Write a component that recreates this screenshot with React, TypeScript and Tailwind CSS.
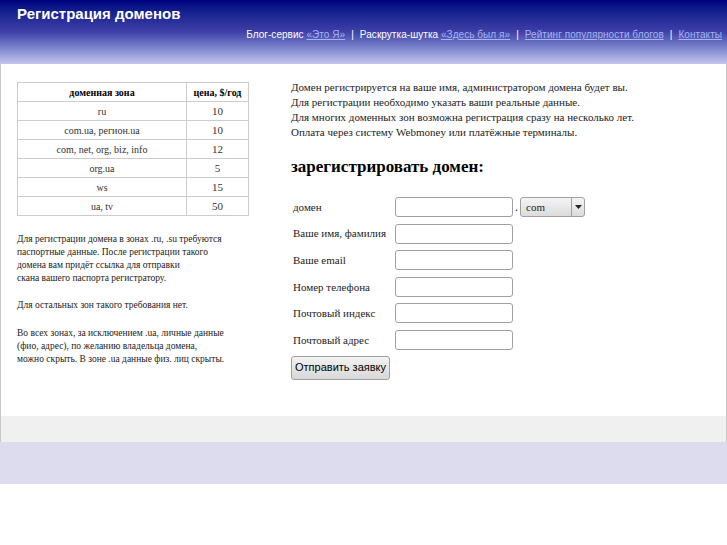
const zones = [
  ['ru', '10'],
  ['com.ua, регион.ua', '10'],
  ['com, net, org, biz, info', '12'],
  ['org.ua', '5'],
  ['ws', '15'],
  ['ua, tv', '50'],
];

const fields = ['Ваше имя, фамилия', 'Ваше email', 'Номер телефона', 'Почтовый индекс', 'Почтовый адрес'];

const serif = { fontFamily: '"Liberation Serif", "DejaVu Serif", serif' };

export default function App() {
  return (
    <div className="w-[727px] h-[545px] bg-white text-black" style={serif}>
      {/* Header */}
      <div className="h-[64px] bg-gradient-to-b from-[#000080] via-[#4040a8] to-[#c6c6ec] px-[17px] pt-[4px] font-['Liberation_Sans',sans-serif]">
        <h1 className="text-[15px] font-bold text-white leading-[20px]">Регистрация доменов</h1>
        <div className="mt-[5px] flex justify-end mr-[-12px] text-[10px] leading-[12px] text-white gap-[6px] tracking-[0.05px]">
          <span>Блог-сервис <a className="text-[#a4b4f4] underline">«Это Я»</a></span>
          <span>|</span>
          <span>Раскрутка-шутка <a className="text-[#a4b4f4] underline">«Здесь был я»</a></span>
          <span>|</span>
          <a className="text-[#a4b4f4] underline">Рейтинг популярности блогов</a>
          <span>|</span>
          <a className="text-[#a4b4f4] underline">Контакты</a>
        </div>
      </div>

      {/* Body */}
      <div className="h-[352px] border-x border-[#c8c8c8] flex pt-[18px]">
        <div className="ml-[16px] w-[232px]">
          <table className="w-[232px] border-collapse border border-[#cccccc] text-[10px] text-[#333]">
            <thead>
              <tr className="h-[19px]">
                <th className="border border-[#cccccc] font-bold text-black w-[169px]">доменная зона</th>
                <th className="border border-[#cccccc] font-bold text-black">цена, $/год</th>
              </tr>
            </thead>
            <tbody>
              {zones.map(([z, p]) => (
                <tr key={z} className="h-[19px]">
                  <td className="border border-[#cccccc] text-center">{z}</td>
                  <td className="border border-[#cccccc] text-center text-[11px]">{p}</td>
                </tr>
              ))}
            </tbody>
          </table>
          <div className="mt-[17px] text-[9.5px] leading-[13px] text-[#222]">
            <p>
              Для регистрации домена в зонах .ru, .su требуются<br />
              паспортные данные. После регистрации такого<br />
              домена вам придёт ссылка для отправки<br />
              скана вашего паспорта регистратору.
            </p>
            <p className="mt-[14px]">Для остальных зон такого требования нет.</p>
            <p className="mt-[15px]">
              Во всех зонах, за исключением .ua, личные данные<br />
              (фио, адрес), по желанию владельца домена,<br />
              можно скрыть. В зоне .ua данные физ. лиц скрыты.
            </p>
          </div>
        </div>

        <div className="ml-[42px] mt-[-2px]">
          <p className="text-[11px] leading-[15px] text-[#222]">
            Домен регистрируется на ваше имя, администратором домена будет вы.<br />
            Для регистрации необходимо указать ваши реальные данные.<br />
            Для многих доменных зон возможна регистрация сразу на несколько лет.<br />
            Оплата через систему Webmoney или платёжные терминалы.
          </p>
          <h2 className="mt-[16px] text-[17px] font-bold leading-[22px]">зарегистрировать домен:</h2>

          <div className="mt-[19px] flex flex-col gap-[6.6px] text-[11px] text-[#222]">
            <div className="flex items-center h-[20px]">
              <span className="w-[104px] pl-[2px]">домен</span>
              <input className="w-[118px] h-[20px] border border-[#a0a0a0] rounded-[3px] bg-white" />
              <span className="mx-[2px] text-[12px]">.</span>
              <div className="w-[65px] h-[20px] border border-[#a0a0a0] rounded-[3px] bg-gradient-to-b from-[#f4f4f4] to-[#dcdcdc] flex items-center">
                <span className="flex-1 pl-[5px] text-[11px]">com</span>
                <span className="w-[13px] h-full border-l border-[#a0a0a0] flex items-center justify-center">
                  <svg width="7" height="4" viewBox="0 0 7 4"><path d="M0 0h7L3.5 4z" fill="#222" /></svg>
                </span>
              </div>
            </div>
            {fields.map((f) => (
              <div key={f} className="flex items-center h-[20px]">
                <span className="w-[104px] pl-[2px]">{f}</span>
                <input className="w-[118px] h-[20px] border border-[#a0a0a0] rounded-[3px] bg-white" />
              </div>
            ))}
            <button className="mt-[-1px] w-[99px] h-[24px] whitespace-nowrap border border-[#a0a0a0] rounded-[3px] bg-gradient-to-b from-[#f2f2f2] to-[#d8d8d8] text-[11px] text-black font-['Liberation_Sans',sans-serif] self-start">
              Отправить заявку
            </button>
          </div>
        </div>
      </div>

      {/* Footer */}
      <div className="h-[26px] bg-[#f0f0f0] border-x border-[#c8c8c8]" />
      <div className="h-[42px] bg-[#dcdcee]" />
    </div>
  );
}
